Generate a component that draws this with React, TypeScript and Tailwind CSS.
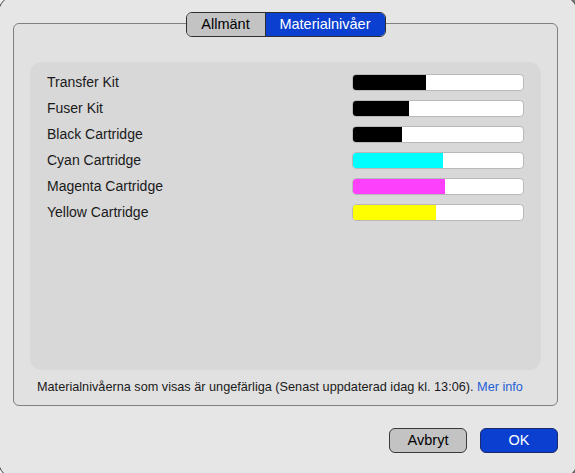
import React from "react";

const rows: { name: string; pct: number; color: string }[] = [
  { name: "Transfer Kit", pct: 43, color: "#000000" },
  { name: "Fuser Kit", pct: 33, color: "#000000" },
  { name: "Black Cartridge", pct: 29, color: "#000000" },
  { name: "Cyan Cartridge", pct: 53, color: "#00ffff" },
  { name: "Magenta Cartridge", pct: 54, color: "#fc40fb" },
  { name: "Yellow Cartridge", pct: 49, color: "#ffff00" },
];

export default function App() {
  return (
    <div
      className="w-[575px] h-[473px] overflow-hidden bg-gradient-to-r from-[#f4f4f4] to-[#7d7d7d]"
      style={{ fontFamily: '"Liberation Sans", Arial, sans-serif' }}
    >
      <div className="-ml-[2px] -mt-[5px] w-[580px] h-[484px] rounded-[18px] border border-[#3c3c3c] bg-[#e6e6e6] pt-[27px] pl-[14px]">
        {/* group box */}
        <div className="w-[545px] h-[383px] rounded-[6px] border border-[#808080] bg-[#e1e1e1] flex flex-col items-center">
          <div className="-mt-[12px] flex h-[25px] rounded-[6px] border border-[#2e2e2e] overflow-hidden text-[14.5px] leading-none">
            <div className="w-[79px] flex items-center justify-center bg-[#c3c3c3] text-black border-r border-[#2e2e2e]">
              Allmänt
            </div>
            <div className="w-[119px] flex items-center justify-center bg-[#0b3fd0] text-white">
              Materialnivåer
            </div>
          </div>
          <div className="mt-[25px] w-[511px] h-[308px] rounded-[12px] bg-[#d8d8d8] pt-[7px] pl-[17px] pr-[17px] flex flex-col">
            {rows.map((r) => (
              <div key={r.name} className="h-[26px] flex items-center justify-between">
                <span className="text-[14px] text-[#1a1a1a]">{r.name}</span>
                <div className="w-[172px] h-[17px] rounded-[4px] border border-[#b9b9b9] bg-white overflow-hidden flex">
                  <div className="h-full" style={{ width: `${r.pct}%`, backgroundColor: r.color }} />
                </div>
              </div>
            ))}
          </div>
          <div className="w-full pl-[23px] mt-[8px] text-[12.7px] text-[#1a1a1a]">
            Materialnivåerna som visas är ungefärliga (Senast uppdaterad idag kl. 13:06).{" "}
            <span className="text-[#1f5fd6]">Mer info</span>
          </div>
        </div>
        {/* buttons */}
        <div className="w-[545px] mt-[22px] flex justify-end gap-[13px]">
          <div className="w-[78px] h-[25px] rounded-[6px] border border-[#3a3a3a] bg-[#c3c3c3] flex items-center justify-center text-[14.5px] text-black">
            Avbryt
          </div>
          <div className="w-[78px] h-[25px] rounded-[6px] border border-[#1b2a6b] bg-[#0b3fd0] flex items-center justify-center text-[14.5px] text-white">
            OK
          </div>
        </div>
      </div>
    </div>
  );
}
